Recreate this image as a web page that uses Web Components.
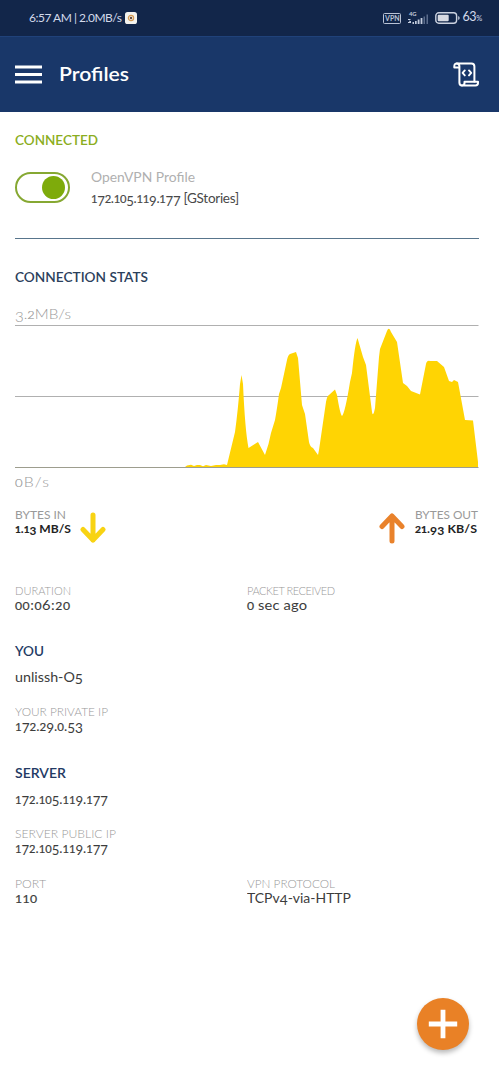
<!DOCTYPE html>
<html lang="en">
<head>
<meta charset="utf-8">
<title>Profiles</title>
<style>
  html, body { margin: 0; background: #fff; }
  body { font-family: Lato, "Open Sans", sans-serif; width: 499px; height: 1080px; overflow: hidden; }
</style>
</head>
<body>
<vpn-app></vpn-app>
<script>
const define = (name, html, setup) => {
  const tpl = document.createElement('template');
  tpl.innerHTML = html;
  customElements.define(name, class extends HTMLElement {
    constructor() {
      super();
      this.attachShadow({ mode: 'open' }).append(tpl.content.cloneNode(true));
    }
    connectedCallback() { if (setup) setup(this, this.shadowRoot); }
  });
};

// A single line of text, widened and tracked to an exact width, with optional old-style figures.
customElements.define('ui-text', class extends HTMLElement {
  constructor() { super(); this.attachShadow({ mode: 'open' }); }
  connectedCallback() {
    const a = n => this.getAttribute(n);
    const text = a('text');
    const w = parseFloat(a('w'));
    let body = text.replace(/&/g, '&amp;');
    if (!this.hasAttribute('lining')) {
      body = body.replace(/[012]+/g, '<span class="x">$&</span>')
                 .replace(/[34579]+(?![^<]*>)/g, '<span class="d">$&</span>');
    }
    this.shadowRoot.innerHTML = `<style>
      :host { display: block; height: 16px; line-height: 16px; white-space: nowrap; flex: none; width: ${w}px;
        font-size: ${a('size') || 13.5}px; font-weight: ${a('weight') || 400}; color: ${a('color') || '#444'};
        margin-top: ${a('mt') || 0}px; }
      .t { display: inline-block; line-height: 16px; height: 16px; transform-origin: 0 50%; }
      .x { font-size: .83em; line-height: 0; -webkit-text-stroke: .2px currentColor; }
      .d { font-size: .98em; line-height: 0; vertical-align: -.19em; }
    </style><span class="t">${body}</span>`;
    const t = this.shadowRoot.querySelector('.t');
    const n = t.getBoundingClientRect().width;
    const k = Math.max(1, Math.min(1.13, w / n));
    const s = (w / k - n) / (text.length - 1);
    t.style.letterSpacing = s.toFixed(3) + 'px';
    t.style.transform = `scaleX(${k.toFixed(4)})`;
  }
});

define('status-bar', `<style>
  :host { display: flex; align-items: center; box-sizing: border-box; height: 36px; padding: 0 17px 0 29px; background: #12264a; }
  .sp { flex: 1; }
  svg { display: block; flex: none; }
  .app { margin-left: 3px; }
  .vpn { box-sizing: border-box; width: 18px; height: 11px; border: 1px solid #b9c3d6; border-radius: 1.5px; display: flex; align-items: center; justify-content: center; font: 700 7px/9px Lato, sans-serif; color: #b9c3d6; margin-right: 7px; }
  .sig { margin-right: 6px; } .bat { margin-right: 2px; }
  .pct { display: flex; align-items: baseline; color: #d3daea; font-size: 12.5px; line-height: 16px; letter-spacing: -.3px; }
  .pct small { font-size: 7.5px; }
</style>
<ui-text text="6:57 AM | 2.0MB/s" lining size="12" w="93" color="#d3daea"></ui-text>
<svg class="app" width="12" height="12" viewBox="0 0 12 12"><rect width="12" height="12" rx="2.6" fill="#f4f3ef"/><circle cx="6" cy="6" r="2.6" fill="none" stroke="#d59a52" stroke-width="1.3"/><circle cx="6" cy="6" r="1.2" fill="#674c3d"/></svg>
<span class="sp"></span>
<span class="vpn">VPN</span>
<svg class="sig" width="21" height="14" viewBox="0 0 21 14" fill="#c3ccdd"><text x="1" y="5.2" font-family="Lato, sans-serif" font-size="5.8" font-weight="700">4G</text><path d="M0 8h3l-2 2h2v2H0v-1h1l1-2H0zM4.500 11h1.500v2H4.500zM7 10h1.700v3H7zM9.700 8.600h1.800V13H9.700zM12.600 7h1.800v6h-1.800z"/><path d="M15.500 5.500h1.500V13h-1.500zM18.500 3.500H20V13h-1.500z" fill="#5b6c8c"/></svg>
<svg class="bat" width="25" height="12" viewBox="0 0 25 12"><rect x=".8" y=".8" width="20.800" height="10.400" rx="3" fill="none" stroke="#cbd2e0" stroke-width="1.4"/><rect x="2.700" y="2.700" width="11" height="6.600" rx="1" fill="#d6d9e2"/><path d="M23.200 4v4l1.300-1V5z" fill="#cbd2e0"/></svg>
<span class="pct">63<small>%</small></span>`);

define('app-header', `<style>
  :host { display: flex; align-items: center; box-sizing: border-box; height: 76px; padding: 0 20px 1px 15px; background: #193769; border-top: 1px solid #20427a; }
  svg { display: block; flex: none; }
  ui-text { margin-left: 17px; }
  .sp { flex: 1; }
</style>
<svg width="27" height="19" viewBox="0 0 27 19"><path d="M0 2h27M0 9.500h27M0 17h27" stroke="#fff" stroke-width="2.800"/></svg>
<ui-text text="Profiles" size="19.5" weight="600" w="70" color="#fff"></ui-text>
<span class="sp"></span>
<svg width="26" height="25" viewBox="0 0 26 25" fill="none" stroke="#fff" stroke-width="2" stroke-linejoin="round" stroke-linecap="round"><path d="M5.800 5.500H1.300V4.200C1.300 2.400 2.300 1.400 3.800 1.400H18.400c2 0 3 1 3 3V19.500"/><path d="M3.800 1.400c1.600 0 2.600 1 2.600 2.800V20.500c0 1.800 1 2.900 2.600 2.900"/><path d="M9 23.400c1.800 0 2.500-1 2.500-2.300v-1.300H25v1.200c0 1.500-1 2.400-2.500 2.400z"/><path d="M11.800 8.400L9.600 10.900l2.200 2.500M16 8.400l2.200 2.500-2.200 2.500" stroke-width="1.900"/></svg>`);

define('toggle-switch', `<style>
  :host { display: flex; justify-content: flex-end; align-items: center; box-sizing: border-box; width: 55px; height: 31px; padding-right: 3px; border: 2px solid #86a832; border-radius: 16px; flex: none; }
  i { width: 23px; height: 23px; border-radius: 50%; background: #7eab0b; }
</style><i></i>`);

define('profile-card', `<style>
  :host { display: block; box-sizing: border-box; border-bottom: 1px solid #58758c; height: 107px; }
  .row { display: flex; align-items: flex-start; margin-top: 24px; }
  .names { margin-left: 21px; margin-top: -3px; }
</style>
<ui-text text="CONNECTED" weight="600" w="83" color="#8bad20"></ui-text>
<div class="row"><toggle-switch></toggle-switch>
<div class="names"><ui-text text="OpenVPN Profile" size="13.8" w="104" color="#b0b0b0"></ui-text>
<ui-text text="172.105.119.177 [GStories]" mt="5" size="13.5" w="148" color="#484848"></ui-text></div></div>`);

define('traffic-chart', `<style>
  :host { display: block; margin-top: 30px; }
  svg { display: block; margin-top: 2px; }
</style>
<ui-text text="CONNECTION STATS" weight="600" w="133" color="#2b405c"></ui-text>
<ui-text text="3.2MB/s" mt="21" size="14" weight="300" w="56" color="#999"></ui-text>
<svg width="464" height="146" viewBox="15 324 464 146">
<path d="M15 325.500H478.500M15 396.500H478.500" stroke="#b0b0b0"/>
<path d="M185 467L187 465.500 191 464.800 194 466 197 465 200 465 203 466.200 206 465 211 466 216 465 220 465 224 464.200 227 465 235 432Q238 410 240 384L241.500 375 243 384Q245 430 248.500 448L258 442 265 455Q269 444 271 433L275 420Q277 409 279 394L281 388 287 360Q288 355 290 354L296 352 298 358 302 405 305 414 309 442Q310 447 313 448L318 455 319 450 326 402Q327 396 329 395L335 389.500 337 395Q340 414 342 416Q345 413 350 382L352 373Q355 343 357.500 338L363 357 366 365 372 412Q373 418 375 408L379 357 380 349 387 331Q389 326 391 332L397 342 403 383 407 386 411 391 420 394.500Q423 379 426 364Q427 360 430 361L437 361 444 367 449 381 452 382 454 380 458 382 465 420 473 420.500 478 462V467Z" fill="#ffd403"/>
<path d="M15 467.500H478.500" stroke="#9d9d8e"/></svg>
<ui-text text="0B/s" mt="4" size="14" weight="300" w="34" color="#999"></ui-text>`);

define('traffic-totals', `<style>
  :host { display: flex; justify-content: space-between; align-items: flex-start; margin: 17px 1px 0 0; height: 34px; }
  .g { display: flex; align-items: flex-start; }
  svg { display: block; margin-top: 5px; }
  .in svg { margin-left: 9px; } .out svg { margin-right: 10px; }
</style>
<div class="g in"><div><ui-text text="BYTES IN" size="10.8" w="51" color="#999"></ui-text><ui-text text="1.13 MB/S" mt="-2" size="11" weight="700" w="56" color="#222"></ui-text></div>
<svg width="26" height="32" viewBox="0 0 26 32" fill="none" stroke="#f8d313" stroke-width="5" stroke-linecap="round" stroke-linejoin="round"><path d="M13 3v25M3 17.500l10 10.500 10-10.500"/></svg></div>
<div class="g out"><svg width="26" height="32" viewBox="0 0 26 32" fill="none" stroke="#e9822b" stroke-width="5" stroke-linecap="round" stroke-linejoin="round"><path d="M13 29V4M3 14.500L13 4l10 10.500"/></svg>
<div><ui-text text="BYTES OUT" size="10.8" w="63" color="#999"></ui-text><ui-text text="21.93 KB/S" mt="-2" size="11" weight="700" w="62" color="#222"></ui-text></div></div>`);

define('info-field', `<style>:host { display: block; }</style><slot></slot>`, (el, root) => {
  if (root.querySelector('ui-text')) return;
  const [l, lw, v, vw] = el.dataset.f.split('|');
  root.innerHTML += `<ui-text text="${l}" size="11" weight="300" w="${lw}" color="#999"></ui-text><ui-text text="${v}" mt="-2" size="13" w="${vw}" color="#3c3c3c"></ui-text>`;
});

define('info-row', `<style>:host { display: grid; grid-template-columns: 232px 1fr; height: 31px; }</style><slot></slot>`);

define('section-title', `<style>:host { display: block; }</style>`, (el, root) => {
  const [l, lw, v, vw] = el.dataset.f.split('|');
  root.innerHTML += `<ui-text text="${l}" weight="600" w="${lw}" color="#233a64"></ui-text><ui-text text="${v}" mt="10" size="13" w="${vw}" color="#3c3c3c"></ui-text>`;
});

define('add-button', `<style>
  :host { position: absolute; left: 417px; top: 998px; width: 52px; height: 52px; border-radius: 50%; background: #e98126; box-shadow: 0 3px 5px rgba(0,0,0,.28); display: flex; align-items: center; justify-content: center; }
</style><svg width="30" height="30" viewBox="0 0 30 30"><path d="M15 .8v28.400M.8 15h28.400" stroke="#fff" stroke-width="4.800"/></svg>`);

define('vpn-app', `<style>
  :host { display: block; position: relative; width: 499px; height: 1080px; background: #fff; }
  main { padding: 20px 20px 0 15px; }
</style>
<status-bar></status-bar>
<app-header></app-header>
<main>
  <profile-card></profile-card>
  <traffic-chart></traffic-chart>
  <traffic-totals></traffic-totals>
  <info-row style="margin-top:42px"><info-field data-f="DURATION|56|00:06:20|55"></info-field><info-field data-f="PACKET RECEIVED|88|0 sec ago|60"></info-field></info-row>
  <section-title style="margin-top:29px" data-f="YOU|29|unlissh-O5|68"></section-title>
  <info-row style="margin-top:19px"><info-field data-f="YOUR PRIVATE IP|93|172.29.0.53|68"></info-field></info-row>
  <section-title style="margin-top:30px" data-f="SERVER|51|172.105.119.177|93"></section-title>
  <info-row style="margin-top:19px"><info-field data-f="SERVER PUBLIC IP|101|172.105.119.177|93"></info-field></info-row>
  <info-row style="margin-top:19px"><info-field data-f="PORT|31|110|22"></info-field><info-field data-f="VPN PROTOCOL|88|TCPv4-via-HTTP|104"></info-field></info-row>
</main>
<add-button></add-button>`);
</script>
</body>
</html>
